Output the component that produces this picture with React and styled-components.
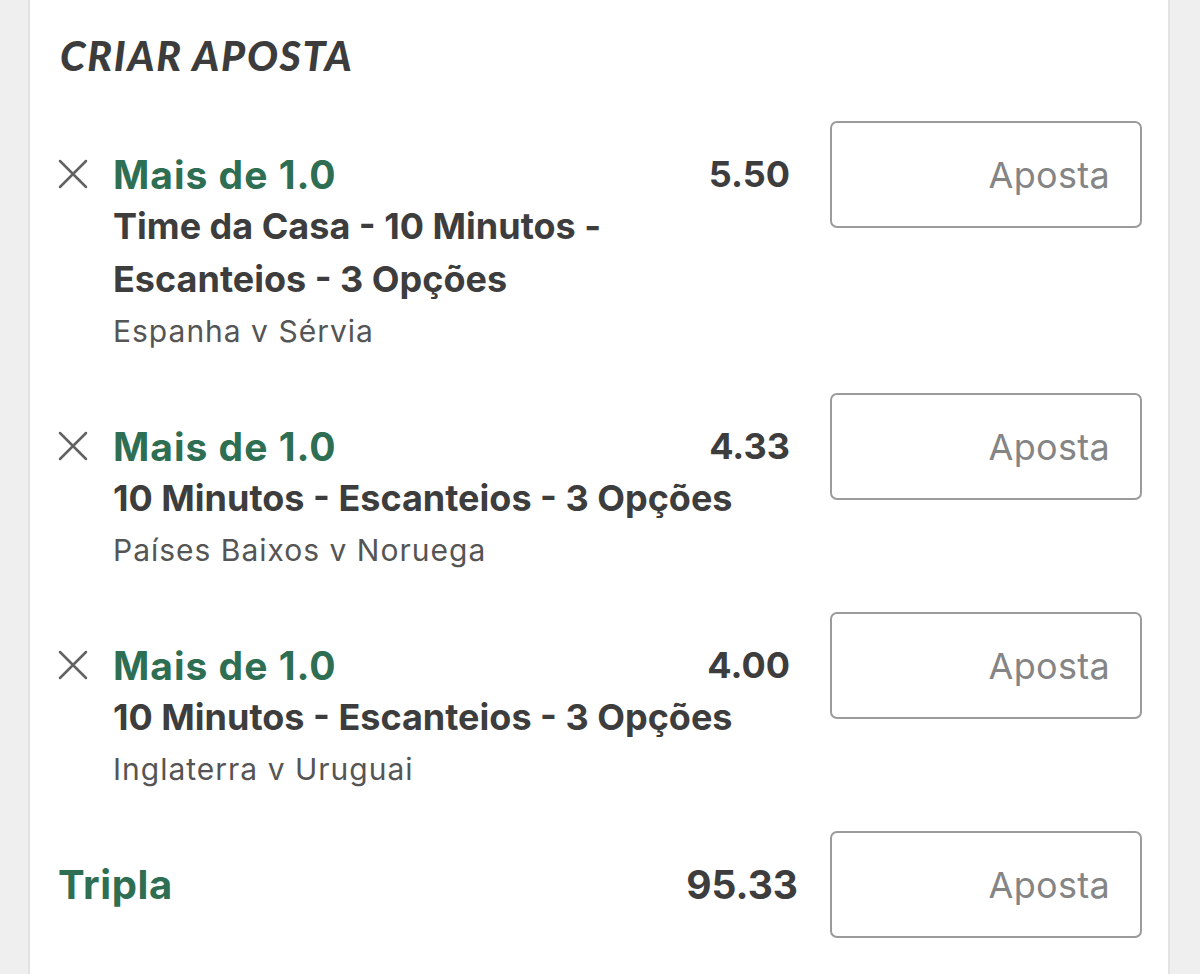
import React from 'react'
import styled, { createGlobalStyle } from 'styled-components'

const GlobalStyle = createGlobalStyle`
  body {
    margin: 0;
    background: #efefef;
    font-family: Inter, "Noto Sans", "Liberation Sans", sans-serif;
  }
`

const Page = styled.div`
  padding: 0 30px 0 28px;
  min-height: 100vh;
  box-sizing: border-box;
  display: flex;
`

const Card = styled.div`
  flex: 1;
  background: #ffffff;
  border-left: 2px solid #e3e3e3;
  border-right: 2px solid #e3e3e3;
  padding: 32px 26px 40px 28px;
`

const Title = styled.h2`
  margin: 0 0 41px 2px;
  font-family: Lato, "Liberation Sans", sans-serif;
  font-style: italic;
  font-weight: 900;
  font-size: 41px;
  line-height: 48px;
  letter-spacing: 1.8px;
  color: #3c3c3c;
`

const BetRow = styled.div`
  display: flex;
  align-items: flex-start;
  gap: 40px;
  margin-bottom: 37px;
`

const BetInfo = styled.div`
  flex: 1;
  display: flex;
  flex-direction: column;
  padding-top: 27px;
`

const HeadLine = styled.div`
  display: flex;
  align-items: center;
  height: 52px;
`

const RemoveButton = styled.button`
  width: 30px;
  height: 30px;
  padding: 0;
  margin: 0 25px 0 0;
  border: none;
  background: none;
  display: flex;
  color: #626262;
`

const Selection = styled.span`
  font-size: 39px;
  font-weight: 700;
  letter-spacing: 1px;
  color: #2e6e52;
`

const Odds = styled.span`
  margin-left: auto;
  font-size: ${p => p.big ? '39px' : '36px'};
  font-weight: 700;
  color: #3d3d3d;
`

const Market = styled.div`
  padding-left: 55px;
  font-size: 36px;
  font-weight: 700;
  line-height: 53px;
  color: #3d3d3d;
`

const Match = styled.div`
  padding-left: 55px;
  font-size: 30px;
  line-height: 50px;
  letter-spacing: 1px;
  color: #555555;
`

const StakeInput = styled.input`
  flex: none;
  width: 312px;
  height: 107px;
  box-sizing: border-box;
  border: 2px solid #9b9b9b;
  border-radius: 7px;
  padding: 0 30px;
  font-family: inherit;
  font-size: 36px;
  letter-spacing: 0.3px;
  text-align: right;
  color: #3d3d3d;
  background: #fff;
  outline: none;
  &::placeholder {
    color: #858585;
  }
`

const TotalRow = styled.div`
  display: flex;
  align-items: center;
  gap: 32px;
`

const TotalLabel = styled.span`
  flex: 1;
  font-size: 40px;
  font-weight: 700;
  letter-spacing: 0.6px;
  color: #2e6e52;
`

const CloseIcon = () => (
  <svg width="30" height="30" viewBox="0 0 30 30" fill="none" stroke="currentColor" strokeWidth="2.5" strokeLinecap="round">
    <path d="M2 2 L28 28 M28 2 L2 28" />
  </svg>
)

const bets = [
  { selection: 'Mais de 1.0', odds: '5.50', market: ['Time da Casa - 10 Minutos -', 'Escanteios - 3 Opções'], match: 'Espanha v Sérvia' },
  { selection: 'Mais de 1.0', odds: '4.33', market: ['10 Minutos - Escanteios - 3 Opções'], match: 'Países Baixos v Noruega' },
  { selection: 'Mais de 1.0', odds: '4.00', market: ['10 Minutos - Escanteios - 3 Opções'], match: 'Inglaterra v Uruguai' },
]

export default function App() {
  return (
    <>
      <GlobalStyle />
      <Page>
        <Card>
          <Title>CRIAR APOSTA</Title>
          {bets.map((bet, i) => (
            <BetRow key={i}>
              <BetInfo>
                <HeadLine>
                  <RemoveButton aria-label="Remover"><CloseIcon /></RemoveButton>
                  <Selection>{bet.selection}</Selection>
                  <Odds>{bet.odds}</Odds>
                </HeadLine>
                {bet.market.map(line => <Market key={line}>{line}</Market>)}
                <Match>{bet.match}</Match>
              </BetInfo>
              <StakeInput placeholder="Aposta" />
            </BetRow>
          ))}
          <TotalRow>
            <TotalLabel>Tripla</TotalLabel>
            <Odds big>95.33</Odds>
            <StakeInput placeholder="Aposta" />
          </TotalRow>
        </Card>
      </Page>
    </>
  )
}
